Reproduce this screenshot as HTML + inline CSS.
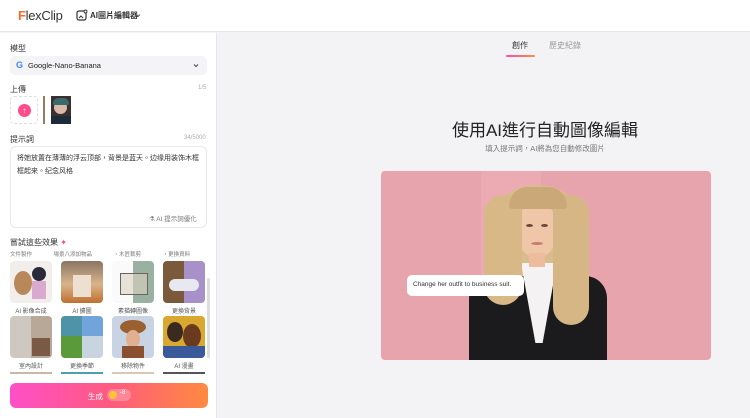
<!DOCTYPE html>
<html><head><meta charset="utf-8"><style>
*{margin:0;padding:0;box-sizing:border-box}
body{width:750px;height:418px;overflow:hidden;background:#f3f3f6;font-family:"Liberation Sans","Noto Sans CJK TC",sans-serif;position:relative;color:#222}
.abs{position:absolute}
.hdr{left:0;top:0;width:750px;height:32px;background:#fff;border-bottom:1px solid #e8e8ec}
.side{left:0;top:33px;width:217px;height:385px;background:#fff;border-right:1px solid #e6e6ea}
.lbl{font-size:8px;color:#333}
.sm{font-size:6px;color:#aaa}
.th{width:42px;height:42px;border-radius:4px;overflow:hidden}
.tl{font-size:6px;color:#555;width:42px;text-align:center}
</style></head><body>
<div class="abs hdr">
 <div class="abs" style="left:18px;top:8px;font-size:13px;color:#333;letter-spacing:-0.3px"><span style="color:#ff6a2a;font-weight:bold">F</span>lexClip</div>
 <svg class="abs" style="left:76px;top:9px" width="12" height="12" viewBox="0 0 12 12"><rect x="1" y="2" width="9" height="9" rx="2" fill="none" stroke="#333" stroke-width="1.2"/><path d="M3 9l2-2 2 2" stroke="#333" fill="none" stroke-width="1"/><circle cx="9.5" cy="2.5" r="1.5" fill="#fff" stroke="#333" stroke-width="0.9"/></svg>
 <div class="abs" style="left:90px;top:10px;font-size:8px;font-weight:bold;color:#333">AI圖片編輯器</div>
 <svg class="abs" style="left:135px;top:13px" width="6" height="5" viewBox="0 0 6 5"><path d="M1 1.5l2 2 2-2" stroke="#555" fill="none" stroke-width="1"/></svg>
</div>
<div class="abs side">
 <div class="abs lbl" style="left:10px;top:10px">模型</div>
 <div class="abs" style="left:10px;top:23px;width:197px;height:19px;background:#f4f4f6;border-radius:5px">
  <div class="abs" style="left:6px;top:4px;font-size:9px;font-weight:bold;color:#4285f4">G</div>
  <div class="abs" style="left:18px;top:5px;font-size:7.5px;color:#222">Google-Nano-Banana</div>
  <svg class="abs" style="left:183px;top:7px" width="6" height="5" viewBox="0 0 6 5"><path d="M1 1.5l2 2 2-2" stroke="#444" fill="none" stroke-width="1"/></svg>
 </div>
 <div class="abs lbl" style="left:10px;top:51px">上傳</div>
 <div class="abs sm" style="left:198px;top:52px">1/5</div>
 <div class="abs" style="left:10px;top:63px;width:28px;height:28px;border:1px dashed #ddd;border-radius:4px">
  <div class="abs" style="left:7px;top:7px;width:13px;height:13px;border-radius:50%;background:#ff4d8a;color:#fff;font-size:8px;text-align:center;line-height:13px">↑</div>
 </div>
 <div class="abs" style="left:43px;top:63px;width:2px;height:28px;background:#9a7a60"></div>
 <div class="abs" style="left:51px;top:63px;width:20px;height:28px;background:#3a3030;overflow:hidden"><div class="abs" style="left:3px;top:5px;width:13px;height:13px;border-radius:50%;background:#d9b9a8"></div><div class="abs" style="left:2px;top:2px;width:16px;height:7px;border-radius:8px 8px 2px 2px;background:#3b6a6a"></div><div class="abs" style="left:0;top:20px;width:20px;height:8px;background:#1d2a3a"></div></div>
 <div class="abs lbl" style="left:10px;top:101px">提示詞</div>
 <div class="abs sm" style="left:184px;top:102px">34/5000</div>
 <div class="abs" style="left:10px;top:113px;width:197px;height:82px;border:1px solid #e8e8ec;border-radius:6px">
  <div class="abs" style="left:6px;top:5px;width:185px;font-size:7px;line-height:13px;color:#333">将她放置在薄薄的浮云顶部，背景是蓝天。边缘用装饰木框框起来。纪念风格</div>
  <div class="abs" style="left:138px;top:66px;font-size:6.5px;color:#777">⚗ AI 提示詞優化</div>
 </div>
 <div class="abs lbl" style="left:10px;top:204px">嘗試這些效果 <span style="color:#ff4d6a">✦</span></div>
 <div class="abs" style="left:10px;top:217px;width:195px;font-size:5.5px;color:#777;word-spacing:20px">文件製作 場景八添加物品 ・木匠裁剪 ・更換資料</div>
 <div class="abs" style="left:207px;top:245px;width:3px;height:80px;background:#ddd;border-radius:2px"></div>
 <div class="abs th" style="left:10px;top:228px;background:#f1eeec"><div class="abs" style="left:4px;top:10px;width:18px;height:24px;border-radius:50%;background:#b8875a"></div><div class="abs" style="left:22px;top:6px;width:14px;height:14px;border-radius:50%;background:#2a2a3a"></div><div class="abs" style="left:22px;top:20px;width:14px;height:18px;background:#d9a9d0"></div></div>
 <div class="abs th" style="left:61px;top:228px;background:linear-gradient(#8a7565,#d9b48a 55%,#c07030)"><div class="abs" style="left:12px;top:14px;width:18px;height:22px;background:#eee0d0"></div></div>
 <div class="abs th" style="left:112px;top:228px;background:linear-gradient(90deg,#fafafa 50%,#9ab0a0 50%)"><div class="abs" style="left:8px;top:12px;width:28px;height:22px;border:1px solid #666;background:rgba(220,210,190,.6)"></div></div>
 <div class="abs th" style="left:163px;top:228px;background:linear-gradient(90deg,#7a5a3a 50%,#a890c8 50%)"><div class="abs" style="left:6px;top:18px;width:30px;height:12px;border-radius:6px;background:#e8e8f0"></div></div>
 <div class="abs tl" style="left:10px;top:273px">AI 影像合成</div>
 <div class="abs tl" style="left:61px;top:273px">AI 擴圖</div>
 <div class="abs tl" style="left:112px;top:273px">素描轉圖像</div>
 <div class="abs tl" style="left:163px;top:273px">更換背景</div>
 <div class="abs th" style="left:10px;top:283px;background:linear-gradient(90deg,#cfc8c0 50%,#b8a898 50%)"><div class="abs" style="left:22px;top:22px;width:18px;height:18px;background:#7a5a45"></div></div>
 <div class="abs th" style="left:61px;top:283px;background:linear-gradient(90deg,#5a9a3a 50%,#c8d4e0 50%)"><div class="abs" style="left:0;top:0;width:42px;height:20px;background:#4a90d8;opacity:.7"></div></div>
 <div class="abs th" style="left:112px;top:283px;background:#c8d4e4"><div class="abs" style="left:8px;top:4px;width:26px;height:14px;border-radius:50%;background:#9a6030"></div><div class="abs" style="left:14px;top:14px;width:14px;height:18px;border-radius:50%;background:#e0b090"></div><div class="abs" style="left:10px;top:30px;width:22px;height:12px;background:#8a5030"></div></div>
 <div class="abs th" style="left:163px;top:283px;background:#d8a830"><div class="abs" style="left:4px;top:6px;width:16px;height:20px;border-radius:50%;background:#3a2a20"></div><div class="abs" style="left:20px;top:8px;width:18px;height:24px;border-radius:50%;background:#6a3a20"></div><div class="abs" style="left:0;top:30px;width:42px;height:12px;background:#3a5a9a"></div></div>
 <div class="abs tl" style="left:10px;top:328px">室內設計</div>
 <div class="abs tl" style="left:61px;top:328px">更換季節</div>
 <div class="abs tl" style="left:112px;top:328px">移除物件</div>
 <div class="abs tl" style="left:163px;top:328px">AI 漫畫</div>
 <div class="abs" style="left:10px;top:339px;width:42px;height:2px;background:#c8b8a8"></div>
 <div class="abs" style="left:61px;top:339px;width:42px;height:2px;background:#4aa0b0"></div>
 <div class="abs" style="left:112px;top:339px;width:42px;height:2px;background:#d8c8b8"></div>
 <div class="abs" style="left:163px;top:339px;width:42px;height:2px;background:#555"></div>
 <div class="abs" style="left:10px;top:350px;width:198px;height:25px;border-radius:6px;background:linear-gradient(90deg,#ff4fc8,#ff5a80 50%,#ff8a40)">
  <div class="abs" style="left:78px;top:8px;font-size:7.5px;color:#fff">生成</div>
  <div class="abs" style="left:97px;top:6px;width:24px;height:12px;border-radius:6px;background:rgba(255,255,255,.25)"><div class="abs" style="left:2px;top:2px;width:8px;height:8px;border-radius:50%;background:#ffc630"></div><div class="abs" style="left:13px;top:1px;font-size:6px;color:#fff">-8</div></div>
 </div>
</div>
<div class="abs" style="left:512px;top:40px;font-size:8px;color:#333">創作</div>
<div class="abs" style="left:549px;top:40px;font-size:8px;color:#999">歷史紀錄</div>
<div class="abs" style="left:506px;top:55px;width:29px;height:2px;border-radius:1px;background:linear-gradient(90deg,#ff4fa8,#ff8a40)"></div>
<div class="abs" style="left:375px;top:116px;width:340px;text-align:center;font-size:17px;color:#222">使用AI進行自動圖像編輯</div>
<div class="abs" style="left:375px;top:143px;width:340px;text-align:center;font-size:7.5px;color:#777">填入提示詞，AI將為您自動修改圖片</div>
<div class="abs" style="left:381px;top:171px;width:330px;height:189px;border-radius:4px;overflow:hidden;background:#e8a4ac">
 <div class="abs" style="left:100px;top:0;width:60px;height:120px;background:#efb0b8;opacity:.6"></div>
 <div class="abs" style="left:105px;top:14px;width:102px;height:150px;border-radius:50px 50px 30px 30px;background:#d9bc8e"></div>
 <div class="abs" style="left:88px;top:105px;width:138px;height:100px;border-radius:22px 22px 0 0;background:#1b1b1e"></div>
 <div class="abs" style="left:140px;top:92px;width:36px;height:80px;background:#f4f2f2;clip-path:polygon(0 0,100% 0,60% 100%,40% 100%)"></div>
 <div class="abs" style="left:136px;top:32px;width:40px;height:54px;border-radius:45%;background:#f0c6a8"></div>
 <div class="abs" style="left:148px;top:82px;width:16px;height:14px;background:#ecbc9c"></div>
 <div class="abs" style="left:145px;top:53px;width:7px;height:3px;border-radius:50%;background:#6a4a3a"></div>
 <div class="abs" style="left:160px;top:53px;width:7px;height:3px;border-radius:50%;background:#6a4a3a"></div>
 <div class="abs" style="left:150px;top:71px;width:12px;height:3px;border-radius:50%;background:#c87a70"></div>
 <div class="abs" style="left:103px;top:24px;width:38px;height:110px;border-radius:20px 10px 20px 20px;background:#d8b887"></div>
 <div class="abs" style="left:172px;top:24px;width:36px;height:130px;border-radius:10px 20px 20px 20px;background:#d6b684"></div>
 <div class="abs" style="left:128px;top:16px;width:58px;height:22px;border-radius:30px 30px 5px 5px;background:#caa878"></div>
 <div class="abs" style="left:26px;top:104px;width:117px;height:21px;border-radius:5px;background:#fff;font-size:6.5px;color:#333;padding:6px 0 0 6px">Change her outfit to business suit.</div>
</div>
</body></html>
